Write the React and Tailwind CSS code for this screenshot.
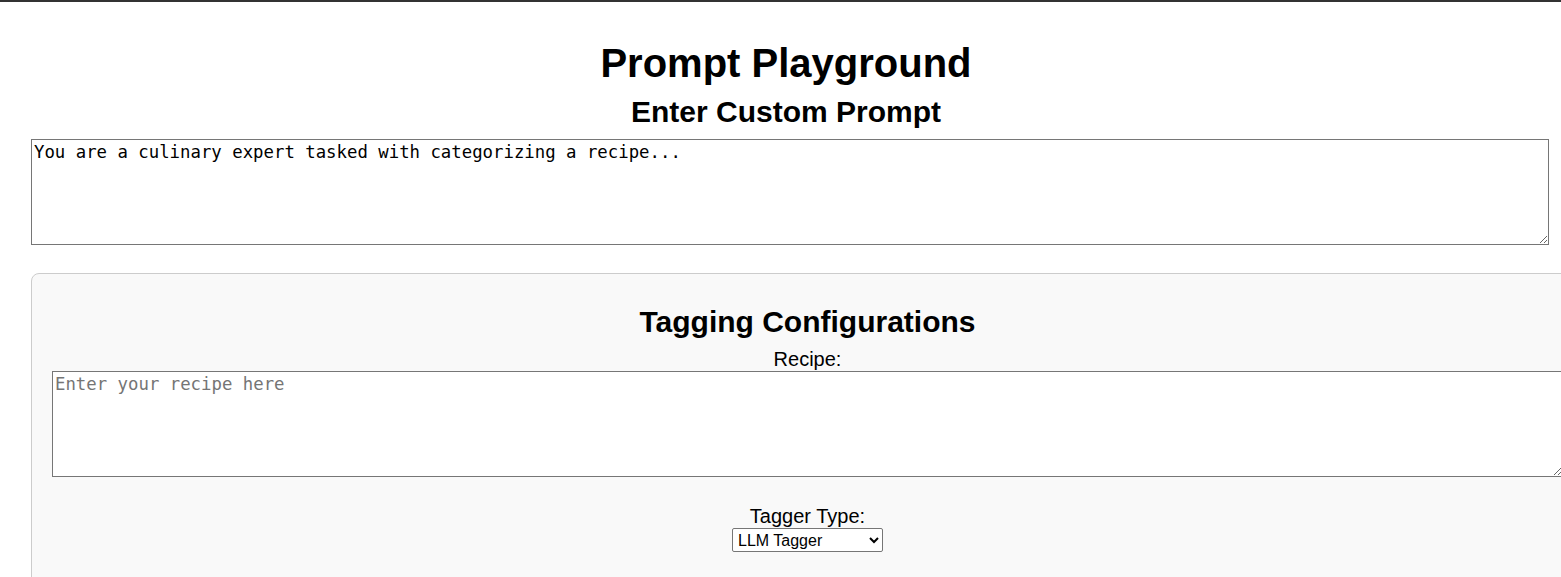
export default function App() {
  return (
    <div className="w-[1561px] h-[577px] overflow-hidden bg-white text-black" style={{ fontFamily: '"Liberation Sans", Arial, sans-serif' }}>
      <div className="h-[2px] bg-[#333333]" />
      <div className="pl-[31px] w-[1541px]">
        <div className="w-[1510px] flex flex-col items-center">
          <h1 className="mt-[38px] text-[40px] leading-[46px] font-bold">Prompt Playground</h1>
          <h2 className="mt-[9px] text-[30px] leading-[34px] font-bold">Enter Custom Prompt</h2>
        </div>
        <textarea
          className="mt-[10px] block w-[1518px] h-[106px] border border-[#767676] bg-white px-[2px] py-[2px] text-[17.33px] leading-[20px] resize-y outline-none"
          style={{ fontFamily: '"DejaVu Sans Mono", monospace' }}
          defaultValue="You are a culinary expert tasked with categorizing a recipe..."
        />
        <div className="mt-[28px] w-[1553px] border border-[#cccccc] rounded-[8px] bg-[#f9f9f9] px-[20px] pt-[20px] pb-[80px]">
          <div className="w-[1511px] flex flex-col items-center">
            <h3 className="mt-[11px] text-[30px] leading-[34px] font-bold">Tagging Configurations</h3>
            <label className="mt-[9px] text-[20px] leading-[23px]">Recipe:</label>
          </div>
          <textarea
            className="block w-[1511px] h-[106px] border border-[#767676] bg-white px-[2px] py-[2px] text-[17.33px] leading-[20px] outline-none placeholder:text-[#757575]"
            style={{ fontFamily: '"DejaVu Sans Mono", monospace' }}
            placeholder="Enter your recipe here"
          />
          <div className="w-[1511px] flex flex-col items-center mt-[28px]">
            <label className="text-[20px] leading-[23px]">Tagger Type:</label>
            <select className="w-[151px] h-[24px] border border-[#767676] rounded-[2px] bg-white text-[16px] px-[1px]" defaultValue="llm">
              <option value="llm">LLM Tagger</option>
              <option value="rule">Rule Tagger</option>
            </select>
          </div>
        </div>
      </div>
    </div>
  );
}
